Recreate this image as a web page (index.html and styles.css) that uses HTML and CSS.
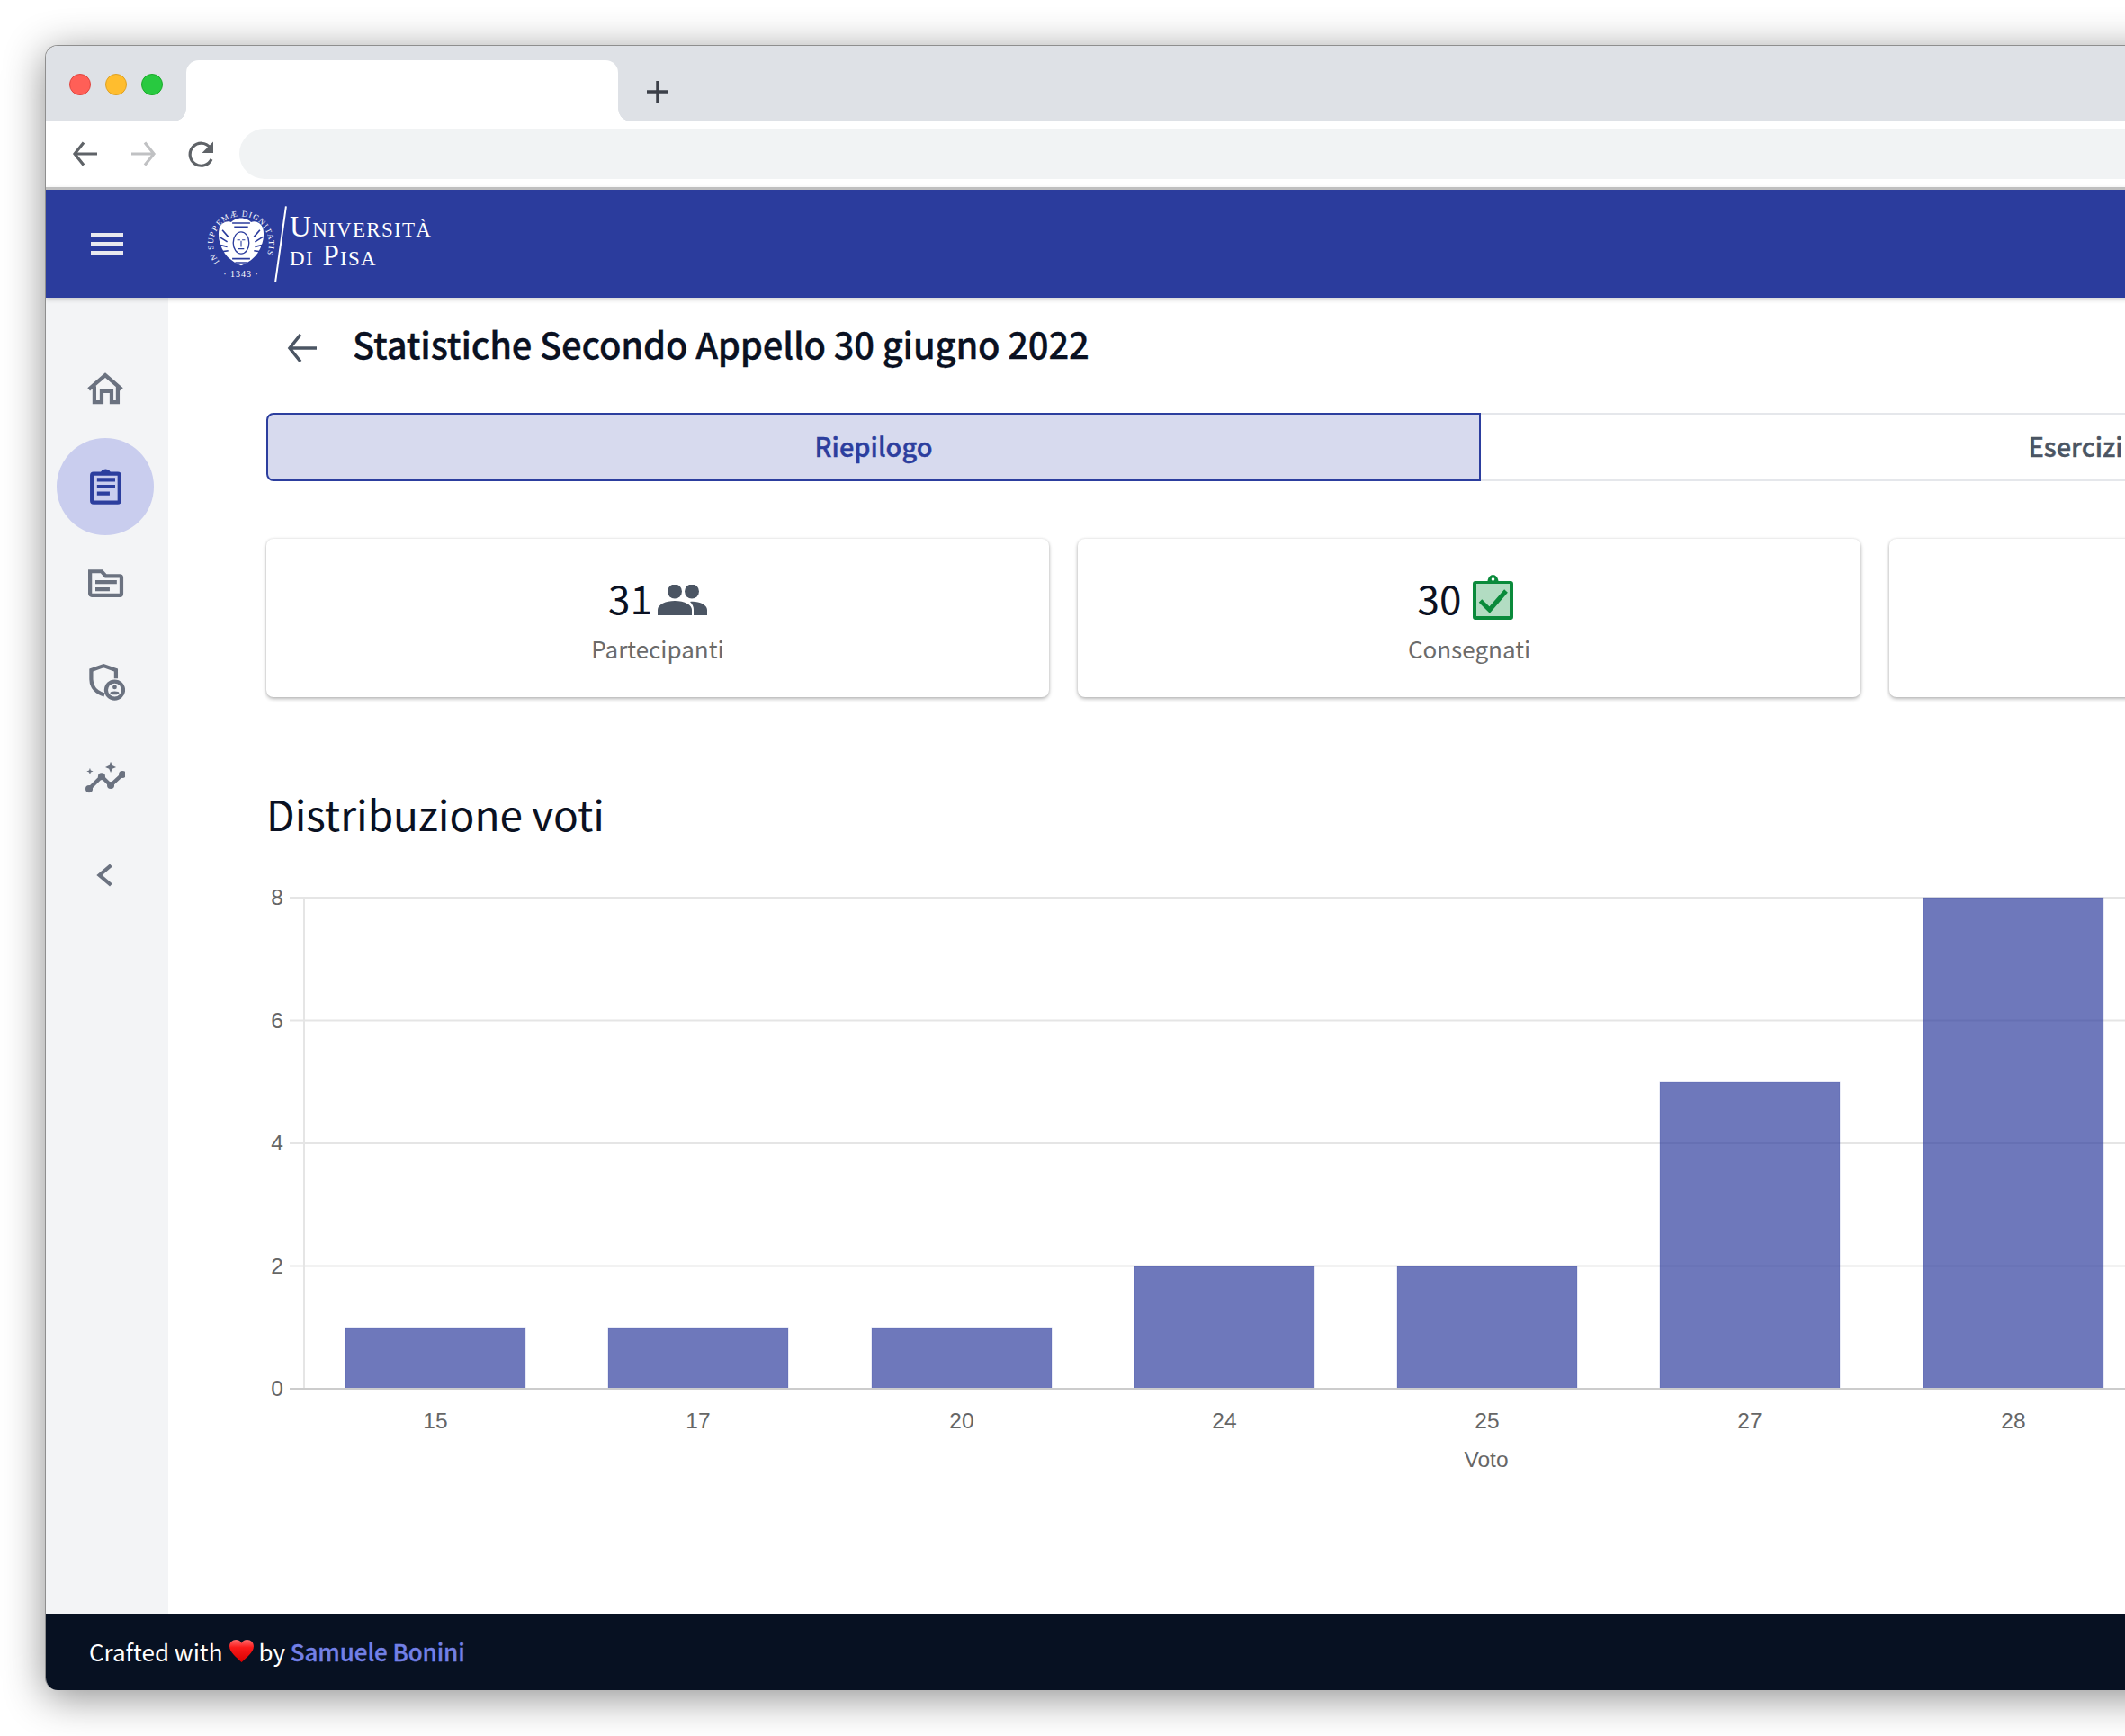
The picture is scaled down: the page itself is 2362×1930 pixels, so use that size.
FILE: index.html
```html
<!DOCTYPE html>
<html lang="it">
<head>
    <meta charset="UTF-8">
    <meta name="viewport" content="width=device-width, initial-scale=1.0">
    <title>Statistiche Secondo Appello</title>
    <link rel="stylesheet" href="styles.css">
</head>
<body>
    <div class="window">
        <div class="tab-strip">
            <div class="lights">
                <span class="light red"></span>
                <span class="light yellow"></span>
                <span class="light green"></span>
            </div>
            <div class="browser-tab"></div>
            <svg class="new-tab" viewBox="0 0 24 24"><path d="M12 0v24M0 12h24" /></svg>
        </div>
        <div class="toolbar">
            <svg class="nav-icon" viewBox="0 0 32 32"><path d="M29 16H4M14 3.500 4 16l10 12.500" /></svg>
            <svg class="nav-icon off" viewBox="0 0 32 32"><path d="M3 16h25M18 3.500 28 16 18 28.500" /></svg>
            <svg class="nav-icon" viewBox="0 0 32 32"><path d="M28 22a12.500 12.500 0 1 1-1.500-13" /><path class="solid" d="M30 2.500V15H17.500z" /></svg>
            <div class="address"></div>
        </div>

        <header class="topbar">
            <div class="burger"><span></span><span></span><span></span></div>
            <div class="logo">
                <svg class="seal" viewBox="0 0 84 84">
                    <defs>
                        <path id="sealRing" d="M18 62A31 31 0 1 1 66 62" />
                    </defs>
                    <text class="seal-text"><textPath href="#sealRing">IN SUPREMÆ DIGNITATIS</textPath></text>
                    <text class="seal-year" x="42" y="79" text-anchor="middle">· 1343 ·</text>
                    <g transform="translate(42 41) scale(1.1) translate(-42 -41)">
                        <path class="seal-body" d="M42 16c4 0 8 2 10 4 5-2 10 1 12 6 2 8 0 17-5 25-4 6-10 10-17 13-7-3-13-7-17-13-5-8-7-17-5-25 2-5 7-8 12-6 2-2 6-4 10-4z" />
                        <path class="seal-lines" d="M23 28l6 7M20 35l8 5M20 43l8 2M22 50l7-1M61 28l-6 7M64 35l-8 5M64 43l-8 2M62 50l-7-1M33 21l18 0M35 25l14 0M33 57l18 0M36 61l12 0" />
                        <ellipse class="seal-face" cx="42" cy="41" rx="8" ry="11" />
                        <path class="seal-lines thin" d="M38 38h3M43 38h3M42 39v6M39 47h6" />
                    </g>
                </svg>
                <span class="logo-bar"></span>
                <div class="logo-name">
                    <span>Università</span>
                    <span>di Pisa</span>
                </div>
            </div>
        </header>

        <div class="body-row">
            <nav class="sidebar">
                <a class="side-item">
                    <svg viewBox="0 0 24 24"><path d="M2 11.900 12 3.300l10 8.600M5.400 10v9.700h4.400V13h6v6.700h3.800V10" /></svg>
                </a>
                <a class="side-item active">
                    <svg viewBox="0 0 24 24"><path d="M4.900 4.200h14.700a1 1 0 0 1 1 1v15.400a1 1 0 0 1-1 1H4.900a1 1 0 0 1-1-1V5.200a1 1 0 0 1 1-1z" /><path class="solid" d="M9 4.500a3.200 3.200 0 0 1 6.400 0z" /><path d="M7 7.800h11M7 12h11M7 16.200h7.700" /></svg>
                </a>
                <a class="side-item">
                    <svg viewBox="0 0 24 24"><path d="M2.800 4.500h7l2.500 2.800h8.500a1 1 0 0 1 1 1V18a1 1 0 0 1-1 1H3.800a1 1 0 0 1-1-1z" /><path d="M6 11h13M6 15.300h8.700" /></svg>
                </a>
                <a class="side-item">
                    <svg viewBox="0 0 24 24"><path d="M18.500 10.500V5.500L11 2.800 3.500 5.500V11c0 4.500 3 8 8 9.500" /><circle cx="17.700" cy="17.500" r="5.200" /><circle class="solid" cx="17.700" cy="15.800" r="1.300" /><ellipse class="solid" cx="17.700" cy="19.300" rx="2.700" ry="1" /></svg>
                </a>
                <a class="side-item">
                    <svg viewBox="0 0 24 24"><path d="M2.200 18.600 9.800 11l5.500 5.400 7.100-6.600" /><circle class="solid" cx="2.200" cy="18.600" r="2.200" /><circle class="solid" cx="9.800" cy="11" r="2.200" /><circle class="solid" cx="15.300" cy="16.400" r="2.200" /><circle class="solid" cx="22.400" cy="9.800" r="2.200" /><path class="solid" d="M15.300 2.100l1 2.300 2.300 1-2.300 1-1 2.300-1-2.300-2.300-1 2.300-1zM2.700 5.900l.5 1.500 1.500.5-1.500.5-.5 1.500-.5-1.500-1.500-.5 1.500-.5z" /></svg>
                </a>
                <a class="side-item">
                    <svg viewBox="0 0 24 24"><path d="M15.500 6l-7 6 7 6" /></svg>
                </a>
            </nav>

            <main class="content">
                <div class="page-title">
                    <svg class="back" viewBox="0 0 36 40"><path d="M34 20H4M16 5 4 20l12 15" /></svg>
                    <h1>Statistiche Secondo Appello 30 giugno 2022</h1>
                </div>

                <div class="tabs">
                    <div class="tab selected">Riepilogo</div>
                    <div class="tab">Esercizi</div>
                </div>

                <div class="cards">
                    <div class="card">
                        <div class="card-value">
                            <span>31</span>
                            <svg class="people" viewBox="0 0 55 34"><circle cx="19" cy="7.500" r="8" /><circle cx="38" cy="7.500" r="8" /><path d="M0 34v-6c0-6 9-10 19-10s19 4 19 10v6zM40 34v-6c0-3-1-6-4-9 9-1 19 3 19 9v6z" /></svg>
                        </div>
                        <div class="card-label">Partecipanti</div>
                    </div>
                    <div class="card">
                        <div class="card-value">
                            <span>30</span>
                            <svg class="delivered" viewBox="0 0 45 50">
                                <path class="clip-frame" d="M3 7h13.500C17 3 19.500 0 22.500 0S28 3 28.500 7H42a3 3 0 0 1 3 3v37a3 3 0 0 1-3 3H3a3 3 0 0 1-3-3V10a3 3 0 0 1 3-3z" />
                                <rect class="clip-paper" x="4" y="10" width="37" height="36" />
                                <circle class="clip-hole" cx="22.500" cy="5" r="1.800" />
                                <path class="clip-check" d="M8.500 29 18.700 39 37 18" />
                            </svg>
                        </div>
                        <div class="card-label">Consegnati</div>
                    </div>
                    <div class="card"></div>
                </div>

                <h2>Distribuzione voti</h2>

                <svg class="chart" width="2628" height="660" viewBox="0 -10 2628 660">
                    <g class="grid">
                        <path d="M27 6H2670M27 142.500H2670M27 279H2670M27 415.500H2670" />
                        <path d="M43 6V552" />
                    </g>
                    <g class="bars">
                        <rect x="89" y="484" width="200" height="68" />
                        <rect x="381" y="484" width="200" height="68" />
                        <rect x="674" y="484" width="200" height="68" />
                        <rect x="966" y="416" width="200" height="136" />
                        <rect x="1258" y="416" width="200" height="136" />
                        <rect x="1550" y="211" width="200" height="341" />
                        <rect x="1843" y="6" width="200" height="546" />
                    </g>
                    <path class="axis" d="M27 552H2670" />
                    <g class="y-labels">
                        <text x="20" y="14">8</text>
                        <text x="20" y="151">6</text>
                        <text x="20" y="287">4</text>
                        <text x="20" y="424">2</text>
                        <text x="20" y="560">0</text>
                    </g>
                    <g class="x-labels">
                        <text x="189" y="596">15</text>
                        <text x="481" y="596">17</text>
                        <text x="774" y="596">20</text>
                        <text x="1066" y="596">24</text>
                        <text x="1358" y="596">25</text>
                        <text x="1650" y="596">27</text>
                        <text x="1943" y="596">28</text>
                        <text x="1357" y="639">Voto</text>
                    </g>
                </svg>
            </main>
        </div>

        <footer class="footer">
            <span>Crafted with</span>
            <svg class="heart" viewBox="0 0 28 26">
                <defs>
                    <linearGradient id="heartFill" x1="0" y1="0" x2="0" y2="1">
                        <stop offset="0" stop-color="#ff6b6b" />
                        <stop offset="0.35" stop-color="#fb1a1a" />
                        <stop offset="1" stop-color="#d80000" />
                    </linearGradient>
                </defs>
                <path fill="url(#heartFill)" d="M14 26C8 20 0 14.500 0 7.500 0 3 3.500 0 7.500 0 10.500 0 13 1.500 14 4c1-2.500 3.500-4 6.500-4C24.500 0 28 3 28 7.500 28 14.500 20 20 14 26z" />
            </svg>
            <span>by <a class="author">Samuele Bonini</a></span>
        </footer>
    </div>
</body>
</html>
```

FILE: styles.css
```css
html, body {
    height: 100%;
}
body {
    margin: 0;
    width: 2362px;
    height: 1930px;
    overflow: hidden;
    background-color: #fff;
    font-family: "Noto Sans CJK SC", "Noto Sans", sans-serif;
    box-sizing: border-box;
    padding: 50px 0 0 50px;
}
.window {
    width: 2400px;
    height: 1829px;
    display: flex;
    flex-direction: column;
    border-radius: 14px;
    border-top: 1px solid #8e8e8e;
    border-left: 1px solid #8e8e8e;
    box-sizing: border-box;
    overflow: hidden;
    background: #fff;
    box-shadow: 0 8px 45px rgba(0, 0, 0, 0.45);
}

/* browser chrome */
.tab-strip {
    height: 84px;
    flex: none;
    background-color: #dee1e6;
    display: flex;
    align-items: flex-end;
}
.lights {
    display: flex;
    gap: 16px;
    padding: 0 26px;
    align-self: flex-start;
    margin-top: 31px;
    width: 156px;
    box-sizing: border-box;
}
.light {
    width: 24px;
    height: 24px;
    border-radius: 50%;
    box-sizing: border-box;
}
.red { background: #ff5f57; border: 1px solid #e0443e; }
.yellow { background: #ffbd2e; border: 1px solid #dea123; }
.green { background: #28c940; border: 1px solid #1aab29; }
.browser-tab {
    width: 480px;
    height: 68px;
    background: #fff;
    border-radius: 14px 14px 0 0;
    position: relative;
}
.browser-tab::before,
.browser-tab::after {
    content: "";
    position: absolute;
    bottom: 0;
    width: 14px;
    height: 14px;
}
.browser-tab::before {
    left: -14px;
    background: radial-gradient(circle at 0 0, #dee1e6 13.500px, #fff 14px);
}
.browser-tab::after {
    right: -14px;
    background: radial-gradient(circle at 100% 0, #dee1e6 13.500px, #fff 14px);
}
.new-tab {
    width: 24px;
    height: 24px;
    margin: 0 0 21px 32px;
    fill: none;
    stroke: #3c4049;
    stroke-width: 3.500;
}
.toolbar {
    height: 73px;
    flex: none;
    box-sizing: border-box;
    padding: 8px 0 9px 28px;
    display: flex;
    align-items: center;
    gap: 32px;
    background: #fff;
}
.nav-icon {
    width: 32px;
    height: 32px;
    flex: none;
    fill: none;
    stroke: #5f6368;
    stroke-width: 3.200;
}
.nav-icon.off {
    stroke: #c0c1c3;
}
.nav-icon .solid {
    fill: #5f6368;
    stroke: none;
}
.address {
    flex: 1;
    height: 56px;
    margin-left: -5px;
    background: #f1f3f4;
    border-radius: 28px 0 0 28px;
}

/* app header */
.topbar {
    height: 123px;
    flex: none;
    box-sizing: border-box;
    border-top: 3px solid #bfbfbf;
    background-color: #2b3c9d;
    display: flex;
    align-items: center;
    padding-left: 50px;
    position: relative;
    box-shadow: 0 2px 5px rgba(0, 0, 0, 0.18);
}
.burger {
    width: 36px;
    display: flex;
    flex-direction: column;
    gap: 5px;
}
.burger span {
    height: 5px;
    background: #e9e9ef;
}
.logo {
    display: flex;
    align-items: center;
    margin-left: 89px;
    color: #fff;
}
.seal {
    width: 84px;
    height: 84px;
    flex: none;
}
.seal-text {
    font-family: "Liberation Serif", serif;
    font-size: 9px;
    letter-spacing: 1.100px;
    fill: #fff;
}
.seal-year {
    font-family: "Liberation Serif", serif;
    font-size: 10px;
    letter-spacing: 1px;
    fill: #fff;
}
.seal-body {
    fill: #fff;
}
.seal-lines {
    fill: none;
    stroke: #2b3c9d;
    stroke-width: 1.500;
}
.seal-lines.thin {
    stroke-width: 1;
}
.seal-face {
    fill: #fff;
    stroke: #2b3c9d;
    stroke-width: 1.200;
}
.logo-bar {
    width: 2px;
    height: 85px;
    margin: 0 9px 0 1px;
    background: #fff;
    transform: rotate(8deg);
}
.logo-name {
    display: flex;
    flex-direction: column;
    margin-top: -6px;
    font-family: "Liberation Serif", serif;
    font-variant: small-caps;
    font-size: 33px;
    line-height: 32px;
    letter-spacing: 1.300px;
}

/* layout under the header */
.body-row {
    flex: 1;
    min-height: 0;
    display: flex;
}
.sidebar {
    width: 136px;
    flex: none;
    background-color: #f3f4f6;
    display: flex;
    flex-direction: column;
    align-items: center;
    padding: 48px 5px 0 0;
    box-sizing: border-box;
}
.side-item {
    width: 108px;
    height: 108px;
    flex: none;
    display: flex;
    align-items: center;
    justify-content: center;
    border-radius: 50%;
}
.side-item svg {
    width: 44px;
    height: 44px;
    fill: none;
    stroke: #6b7280;
    stroke-width: 2.300;
}
.side-item svg .solid {
    fill: #6b7280;
    stroke: none;
}
.side-item.active {
    background-color: #c9cdee;
}
.side-item.active svg {
    stroke: #2c3e9e;
}
.side-item.active svg .solid {
    fill: #2c3e9e;
}
.content {
    flex: 1;
    min-width: 0;
    padding: 0 0 0 109px;
}
.page-title {
    display: flex;
    align-items: center;
    height: 70px;
    margin-top: 16px;
    padding-left: 22px;
}
.back {
    width: 36px;
    height: 40px;
    margin: 10px 38px 0 0;
    fill: none;
    stroke: #4b5563;
    stroke-width: 3.500;
}
h1 {
    margin: 0;
    font-size: 40px;
    font-weight: 500;
    letter-spacing: -0.220px;
    -webkit-text-stroke: 0.300px #0a1122;
    color: #0a1122;
}

.tabs {
    display: flex;
    margin-top: 42px;
    height: 76px;
}
.tab {
    width: 1350px;
    flex: none;
    box-sizing: border-box;
    display: flex;
    align-items: center;
    justify-content: center;
    border-top: 2px solid #e5e7eb;
    border-bottom: 2px solid #e5e7eb;
    padding-bottom: 5px;
    font-size: 29px;
    font-weight: 500;
    -webkit-text-stroke: 0.400px currentColor;
    color: #4b5563;
}
.tab + .tab {
    padding-right: 28px;
}
.tab.selected {
    background-color: #d7daee;
    border: 2px solid #2c3e9e;
    border-radius: 8px 0 0 8px;
    color: #2c3e9e;
}

.cards {
    display: flex;
    gap: 32px;
    margin-top: 64px;
}
.card {
    width: 870px;
    height: 176px;
    flex: none;
    box-sizing: border-box;
    padding-top: 37px;
    background: #fff;
    border-radius: 8px;
    box-shadow: 0 2px 4px rgba(0, 0, 0, 0.28), 0 0 3px rgba(0, 0, 0, 0.1);
    text-align: center;
}
.card-value {
    display: flex;
    align-items: center;
    justify-content: center;
    gap: 9px;
    height: 56px;
    font-size: 44px;
    color: #0a1122;
}
.card-label {
    margin-top: 10px;
    font-size: 26px;
    color: #6b6b6b;
}
.people {
    width: 55px;
    height: 34px;
    margin: 6px 0 0 -3px;
    fill: #4b5563;
}
.delivered {
    width: 45px;
    height: 50px;
    margin: 0 8px 0 4px;
}
.clip-frame { fill: #0a8a3b; }
.clip-paper { fill: #b2dcc2; }
.clip-hole { fill: #fff; }
.clip-check {
    fill: none;
    stroke: #0a8a3b;
    stroke-width: 5;
}

h2 {
    margin: 96px 0 0;
    font-size: 46px;
    line-height: 67px;
    font-weight: 400;
    color: #0a1122;
}
.chart {
    display: block;
    margin: 44px 0 0 -1px;
}
.grid path {
    fill: none;
    stroke: #e5e5e5;
    stroke-width: 2;
}
.bars rect {
    fill: rgba(42, 56, 155, 0.68);
    stroke: rgba(44, 62, 158, 0.2);
}
.axis {
    stroke: #cccccc;
    stroke-width: 2;
}
.chart text {
    font-family: "Liberation Sans", Arial, sans-serif;
    font-size: 24.500px;
    fill: #666;
}
.y-labels text {
    text-anchor: end;
}
.x-labels text {
    text-anchor: middle;
}

.footer {
    height: 85px;
    flex: none;
    box-sizing: border-box;
    padding: 0 0 2px 48px;
    background-color: #071122;
    color: #fff;
    display: flex;
    align-items: center;
    gap: 8px;
    font-size: 26px;
}
.heart {
    width: 27px;
    height: 25px;
    margin-right: -3px;
}
.author {
    color: #7380e6;
    font-weight: 500;
    -webkit-text-stroke: 0.300px #7380e6;
    letter-spacing: -0.100px;
}
```
